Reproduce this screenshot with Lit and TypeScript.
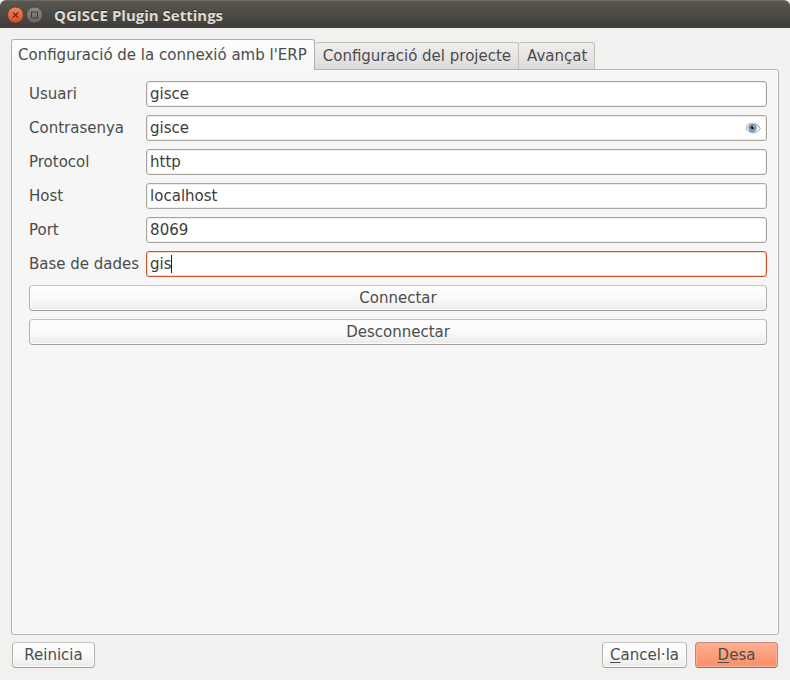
import { LitElement, html, svg, css, nothing } from "lit";
import { customElement, state } from "lit/decorators.js";
import { classMap } from "lit/directives/class-map.js";

interface Field {
  id: string;
  label: string;
  value: string;
  reveal?: boolean;
  active?: boolean;
}

const TABS = ["Configuració de la connexió amb l'ERP", "Configuració del projecte", "Avançat"];

const FIELDS: Field[] = [
  { id: "user", label: "Usuari", value: "gisce" },
  { id: "password", label: "Contrasenya", value: "gisce", reveal: true },
  { id: "protocol", label: "Protocol", value: "http" },
  { id: "host", label: "Host", value: "localhost" },
  { id: "port", label: "Port", value: "8069" },
  { id: "database", label: "Base de dades", value: "gis", active: true },
];

const eyeIcon = svg`
  <svg width="16" height="12" viewBox="0 0 16 12" aria-hidden="true">
    <path d="M1 6.5C3 3.5 5.500 2.500 8 2.500s5 1.200 7.500 4C12.500 9.800 10.500 10.800 8 10.800S3 9.500 1 6.500z" fill="#f3f3f1" stroke="#a4a4a0" stroke-width="1"/>
    <path d="M.5 4C4 .5 11 .2 14.500 4" fill="none" stroke="#bcbcb8" stroke-width="1"/>
    <circle cx="7.500" cy="6" r="3.700" fill="#78a4d2" stroke="#5580ae" stroke-width=".8"/>
    <circle cx="7.500" cy="5.500" r="1.700" fill="#10151c"/>
    <circle cx="8.500" cy="4.700" r=".7" fill="#fff"/>
  </svg>`;

@customElement("title-bar")
export class TitleBar extends LitElement {
  static styles = css`
    :host {
      display: block;
      background: #f2f1f0;
    }
    .bar {
      display: flex;
      align-items: center;
      height: 28px;
      box-sizing: border-box;
      padding: 0 6px;
      gap: 1px;
      border-radius: 6px 6px 0 0;
      border-top: 1px solid #6b6962;
      background: linear-gradient(#59574e, #3e3d39);
    }
    .control {
      display: flex;
      width: 18px;
      height: 18px;
      padding: 0;
      border: 0;
      background: none;
    }
    h1 {
      margin: 0 0 0 10px;
      font: bold 15px/20px "Open Sans", "Noto Sans", sans-serif;
      color: #dfdbd2;
      text-shadow: 0 -1px #33322e;
    }
  `;

  render() {
    return html`
      <header class="bar">
        <button class="control" aria-label="Tanca">
          <svg width="18" height="18" viewBox="0 0 18 18">
            <defs>
              <linearGradient id="close" x2="0" y2="1">
                <stop offset="0" stop-color="#f58560" />
                <stop offset="1" stop-color="#dd4a1b" />
              </linearGradient>
            </defs>
            <circle cx="9.500" cy="9" r="8" fill="url(#close)" stroke="#3c3a35" stroke-width=".7" />
            <path d="M7 6.500l5 5m0-5l-5 5" stroke="#54301f" stroke-width="1.200" />
          </svg>
        </button>
        <button class="control" aria-label="Maximitza">
          <svg width="18" height="18" viewBox="0 0 18 18">
            <defs>
              <linearGradient id="max" x2="0" y2="1">
                <stop offset="0" stop-color="#8d8b83" />
                <stop offset="1" stop-color="#67655d" />
              </linearGradient>
            </defs>
            <circle cx="9.500" cy="9" r="8" fill="url(#max)" stroke="#3c3a35" stroke-width=".7" />
            <rect x="6.500" y="6" width="6" height="6" fill="none" stroke="#3d3c36" />
          </svg>
        </button>
        <h1>QGISCE Plugin Settings</h1>
      </header>
    `;
  }
}

@customElement("app-root")
export class AppRoot extends LitElement {
  @state() private tab = 0;

  static styles = css`
    :host {
      display: flex;
      flex-direction: column;
      min-height: 100vh;
      background: #f2f1f0;
      color: #4c4c4c;
      font: 15px/18px "DejaVu Sans", sans-serif;
    }
    button,
    input {
      font: inherit;
      color: inherit;
      box-sizing: border-box;
      margin: 0;
      outline: none;
    }
    .body {
      flex: 1;
      display: flex;
      flex-direction: column;
      padding: 11px 11px 12px;
    }
    .tabs {
      display: flex;
      align-items: flex-end;
    }
    .tab {
      height: 27px;
      padding: 0 7px 0 8px;
      border: 1px solid #c3c1be;
      border-left-width: 0;
      border-bottom: 0;
      border-radius: 3px 3px 0 0;
      background: linear-gradient(#f0efee, #dddbd9);
      white-space: nowrap;
    }
    .tab.selected {
      position: relative;
      height: 31px;
      margin-bottom: -1px;
      padding: 0 7px 0 6px;
      border-color: #b2afaa;
      border-left-width: 1px;
      background: linear-gradient(#fefefe, #f6f6f6);
    }
    .pane {
      flex: 1;
      display: flex;
      flex-direction: column;
      gap: 8px;
      padding: 11px 11px 11px 17px;
      border: 1px solid #b6b3ae;
      border-radius: 0 3px 3px 3px;
      box-shadow: inset 0 0 0 1px #fafafa;
      background: #f6f6f6;
    }
    .form {
      display: grid;
      grid-template-columns: max-content 1fr;
      align-items: center;
      gap: 8px 7px;
    }
    .field {
      position: relative;
      display: flex;
    }
    .input {
      flex: 1;
      min-width: 0;
      height: 26px;
      padding: 0 4px 0 3px;
      border: 1px solid #aaa7a1;
      border-radius: 3px;
      box-shadow: inset 0 0 0 1px #eeedec;
      background: #fff;
      color: #3c3c3c;
    }
    .active .input {
      border-color: #d2572b;
      box-shadow: inset 0 0 0 1px #fbd5c6;
      caret-color: transparent;
    }
    .caret {
      position: absolute;
      left: 25px;
      top: 4px;
      width: 1px;
      height: 18px;
      background: #222;
    }
    .reveal {
      position: absolute;
      right: 6px;
      top: 7px;
      display: flex;
      padding: 0;
      border: 0;
      background: none;
    }
    .button {
      min-width: 83px;
      height: 26px;
      padding: 0 7px;
      border: 1px solid #b3b0ab;
      border-top-color: #c6c4c1;
      border-bottom-color: #a19e98;
      border-radius: 4px;
      background: linear-gradient(#fefefe, #fafafa 50%, #ebeae9);
      box-shadow: inset 0 0 0 1px #fcfcfc;
    }
    .footer {
      display: flex;
      gap: 8px;
      padding: 7px 1px 0;
    }
    .cancel {
      margin-left: auto;
    }
    .save {
      border-color: #b98c7b;
      border-bottom-color: #96705f;
      background: linear-gradient(#fdae90, #f78f67);
      box-shadow: inset 0 0 0 1px #fbb197;
    }
    .key {
      text-decoration: underline;
      text-underline-offset: 2px;
      text-decoration-thickness: 1px;
      text-decoration-skip-ink: none;
    }
  `;

  private renderField(f: Field) {
    return html`
      <label for=${f.id}>${f.label}</label>
      <div class=${classMap({ field: true, active: !!f.active })}>
        <input class="input" id=${f.id} type="text" .value=${f.value} />
        ${f.active ? html`<span class="caret"></span>` : nothing}
        ${f.reveal ? html`<button class="reveal" aria-label="Mostra la contrasenya">${eyeIcon}</button>` : nothing}
      </div>
    `;
  }

  render() {
    return html`
      <title-bar></title-bar>
      <main class="body">
        <div class="tabs" role="tablist">
          ${TABS.map(
            (name, i) => html`<button
              class=${classMap({ tab: true, selected: i === this.tab })}
              role="tab"
              aria-selected=${i === this.tab}
              @click=${() => (this.tab = i)}
            >${name}</button>`
          )}
        </div>
        <section class="pane" role="tabpanel">
          <div class="form">${FIELDS.map((f) => this.renderField(f))}</div>
          <button class="button">Connectar</button>
          <button class="button">Desconnectar</button>
        </section>
        <footer class="footer">
          <button class="button">Reinicia</button>
          <button class="button cancel"><span class="key">C</span>ancel·la</button>
          <button class="button save"><span class="key">D</span>esa</button>
        </footer>
      </main>
    `;
  }
}
